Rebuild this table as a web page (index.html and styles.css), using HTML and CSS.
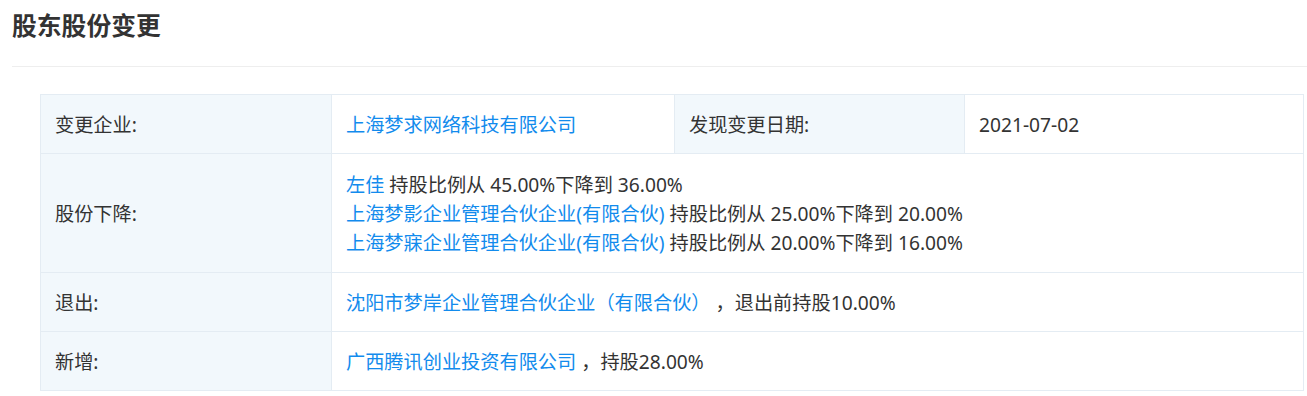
FILE: index.html
```html
<!DOCTYPE html>
<html lang="zh-CN">
<head>
<meta charset="utf-8">
<title>股东股份变更</title>
<link rel="stylesheet" href="styles.css">
</head>
<body>
<section class="panel">
  <h2 class="panel-title">股东股份变更</h2>
  <div class="panel-body">
    <table class="change-table">
      <colgroup>
        <col class="c-label"><col class="c-value"><col class="c-label2"><col class="c-value2">
      </colgroup>
      <tr>
        <td class="label">变更企业:</td>
        <td><a class="link">上海梦求网络科技有限公司</a></td>
        <td class="label">发现变更日期:</td>
        <td>2021-07-02</td>
      </tr>
      <tr>
        <td class="label">股份下降:</td>
        <td colspan="3" class="multi">
          <div><a class="link">左佳</a> 持股比例从 45.00%下降到 36.00%</div>
          <div><a class="link">上海梦影企业管理合伙企业(有限合伙)</a> 持股比例从 25.00%下降到 20.00%</div>
          <div><a class="link">上海梦寐企业管理合伙企业(有限合伙)</a> 持股比例从 20.00%下降到 16.00%</div>
        </td>
      </tr>
      <tr>
        <td class="label">退出:</td>
        <td colspan="3"><a class="link">沈阳市梦岸企业管理合伙企业（有限合伙）</a> ，退出前持股10.00%</td>
      </tr>
      <tr>
        <td class="label">新增:</td>
        <td colspan="3"><a class="link">广西腾讯创业投资有限公司</a> ，持股28.00%</td>
      </tr>
    </table>
  </div>
</section>
</body>
</html>
```

FILE: styles.css
```css
html, body {
  margin: 0;
  padding: 0;
  background: #fff;
}
body {
  font-family: "Noto Sans", "Noto Sans CJK SC", sans-serif;
  color: #333;
}
.panel {
  padding-left: 12px;
}
.panel-title {
  margin: 0;
  padding-top: 6px;
  height: 67px;
  box-sizing: border-box;
  font-family: "Noto Sans CJK SC", sans-serif;
  font-size: 24.8px;
  line-height: 36px;
  font-weight: bold;
  color: #333;
  border-bottom: 1px solid #eeeeee;
}
.panel-body {
  padding: 27px 3px 0 28px;
}
.change-table {
  width: 100%;
  border-collapse: collapse;
  font-size: 19.2px;
  line-height: 29px;
}
.c-label { width: 291px; }
.c-value { width: 343px; }
.c-label2 { width: 290px; }
.change-table td {
  border: 1px solid #e4ecf3;
  padding: 14.5px 14px 14.5px 14px;
  vertical-align: middle;
  color: #333;
}
.change-table td.multi {
  padding-top: 15.5px;
  padding-bottom: 15.5px;
}
.change-table td.label {
  background: #f2f8fc;
}
.link {
  color: #128bed;
  text-decoration: none;
}
```
